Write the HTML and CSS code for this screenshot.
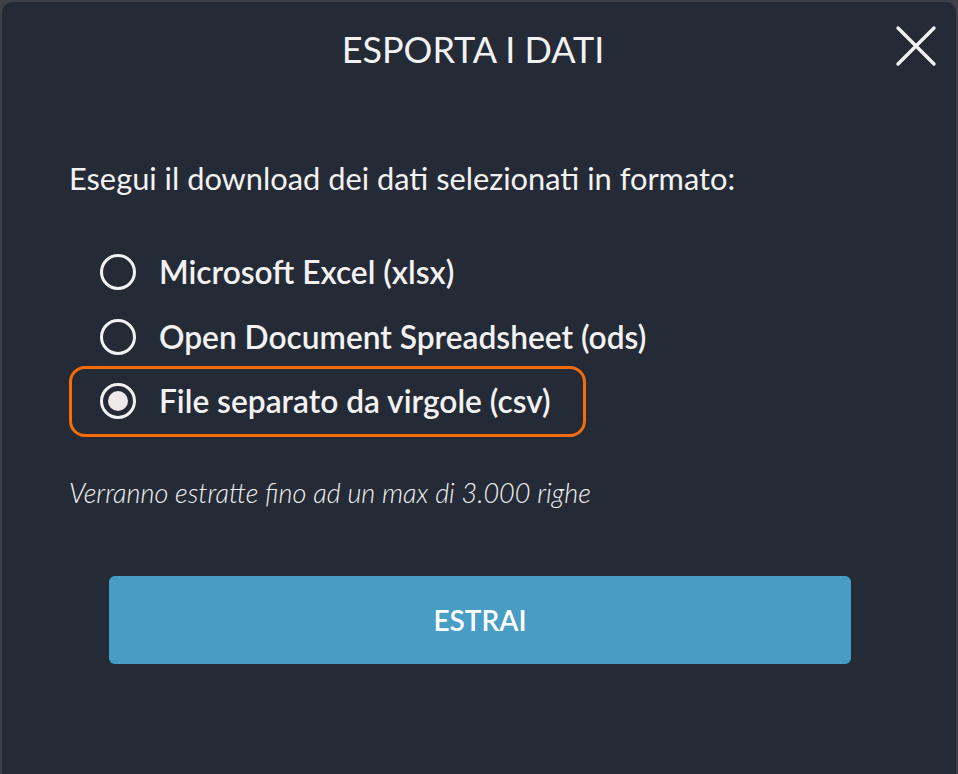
FILE: index.html
```html
<!DOCTYPE html>
<html lang="it">
<head>
    <meta charset="UTF-8">
    <title>Esporta i dati</title>
    <link rel="stylesheet" href="styles.css">
</head>
<body>
    <div class="dialog">
        <div class="dialog-header">
            <h1 class="dialog-title">ESPORTA I DATI</h1>
            <button type="button" class="close-btn" aria-label="Chiudi">
                <svg width="42" height="42" viewBox="0 0 42 42">
                    <path d="M3 3 L39 39 M39 3 L3 39" stroke="#f2f2f2" stroke-width="3.4" stroke-linecap="round" fill="none"/>
                </svg>
            </button>
        </div>

        <div class="dialog-body">
            <p class="intro">Esegui il download dei dati selezionati in formato:</p>

            <div class="options">
                <label class="option">
                    <span class="radio"></span>
                    <span class="option-label">Microsoft Excel (xlsx)</span>
                </label>
                <label class="option">
                    <span class="radio"></span>
                    <span class="option-label">Open Document Spreadsheet (ods)</span>
                </label>
                <label class="option selected">
                    <span class="radio checked"></span>
                    <span class="option-label">File separato da virgole (csv)</span>
                </label>
            </div>

            <p class="note">Verranno estratte fino ad un max di 3.000 righe</p>

            <button type="button" class="extract-btn">ESTRAI</button>
        </div>
    </div>
</body>
</html>
```

FILE: styles.css
```css
body {
    margin: 0;
    background-color: #3d4046;
    font-family: Lato, "Open Sans", sans-serif;
    color: #f2f2f2;
    overflow: hidden;
}

.dialog {
    margin: 2px 2px 0 2px;
    height: 780px;
    background-color: #252b36;
    border-radius: 10px 10px 0 0;
    box-sizing: border-box;
}

.dialog-header {
    position: relative;
    padding-top: 25px;
    text-align: center;
}

.dialog-title {
    margin: 0;
    font-size: 36px;
    line-height: 44px;
    font-weight: normal;
    padding-right: 12px;
}

.close-btn {
    position: absolute;
    top: 23px;
    right: 19px;
    background: none;
    border: none;
    padding: 0;
    cursor: pointer;
    line-height: 0;
}

.dialog-body {
    padding: 0 67px;
}

.intro {
    margin: 89px 0 0 0;
    font-size: 30.8px;
    line-height: 38px;
}

.options {
    display: flex;
    flex-direction: column;
    gap: 13px;
    margin-top: 48px;
}

.option {
    display: flex;
    align-items: center;
    gap: 23px;
    height: 52px;
    padding: 0 32px 0 28px;
    font-size: 31.7px;
    font-weight: 600;
    width: max-content;
    border: 3px solid transparent;
    border-radius: 16px;
    box-sizing: border-box;
}

.option.selected {
    border-color: #f66c08;
    height: 71px;
    margin-top: -10px;
    padding-bottom: 2px;
}

.radio {
    width: 36px;
    height: 36px;
    border: 3px solid #f2f2f2;
    border-radius: 50%;
    box-sizing: border-box;
    position: relative;
}

.radio.checked::after {
    content: "";
    position: absolute;
    top: 5px;
    left: 5px;
    width: 20px;
    height: 20px;
    border-radius: 50%;
    background-color: #ede8ea;
}

.note {
    margin: 40px 0 0 0;
    font-size: 27px;
    line-height: 32px;
    font-style: italic;
    font-weight: 300;
}

.extract-btn {
    display: block;
    width: 742px;
    height: 88px;
    margin: 67px 0 0 40px;
    background-color: #489dc5;
    color: #ffffff;
    border: none;
    border-radius: 6px;
    font-family: Lato, sans-serif;
    font-size: 28px;
    font-weight: 600;
    cursor: pointer;
}
```
